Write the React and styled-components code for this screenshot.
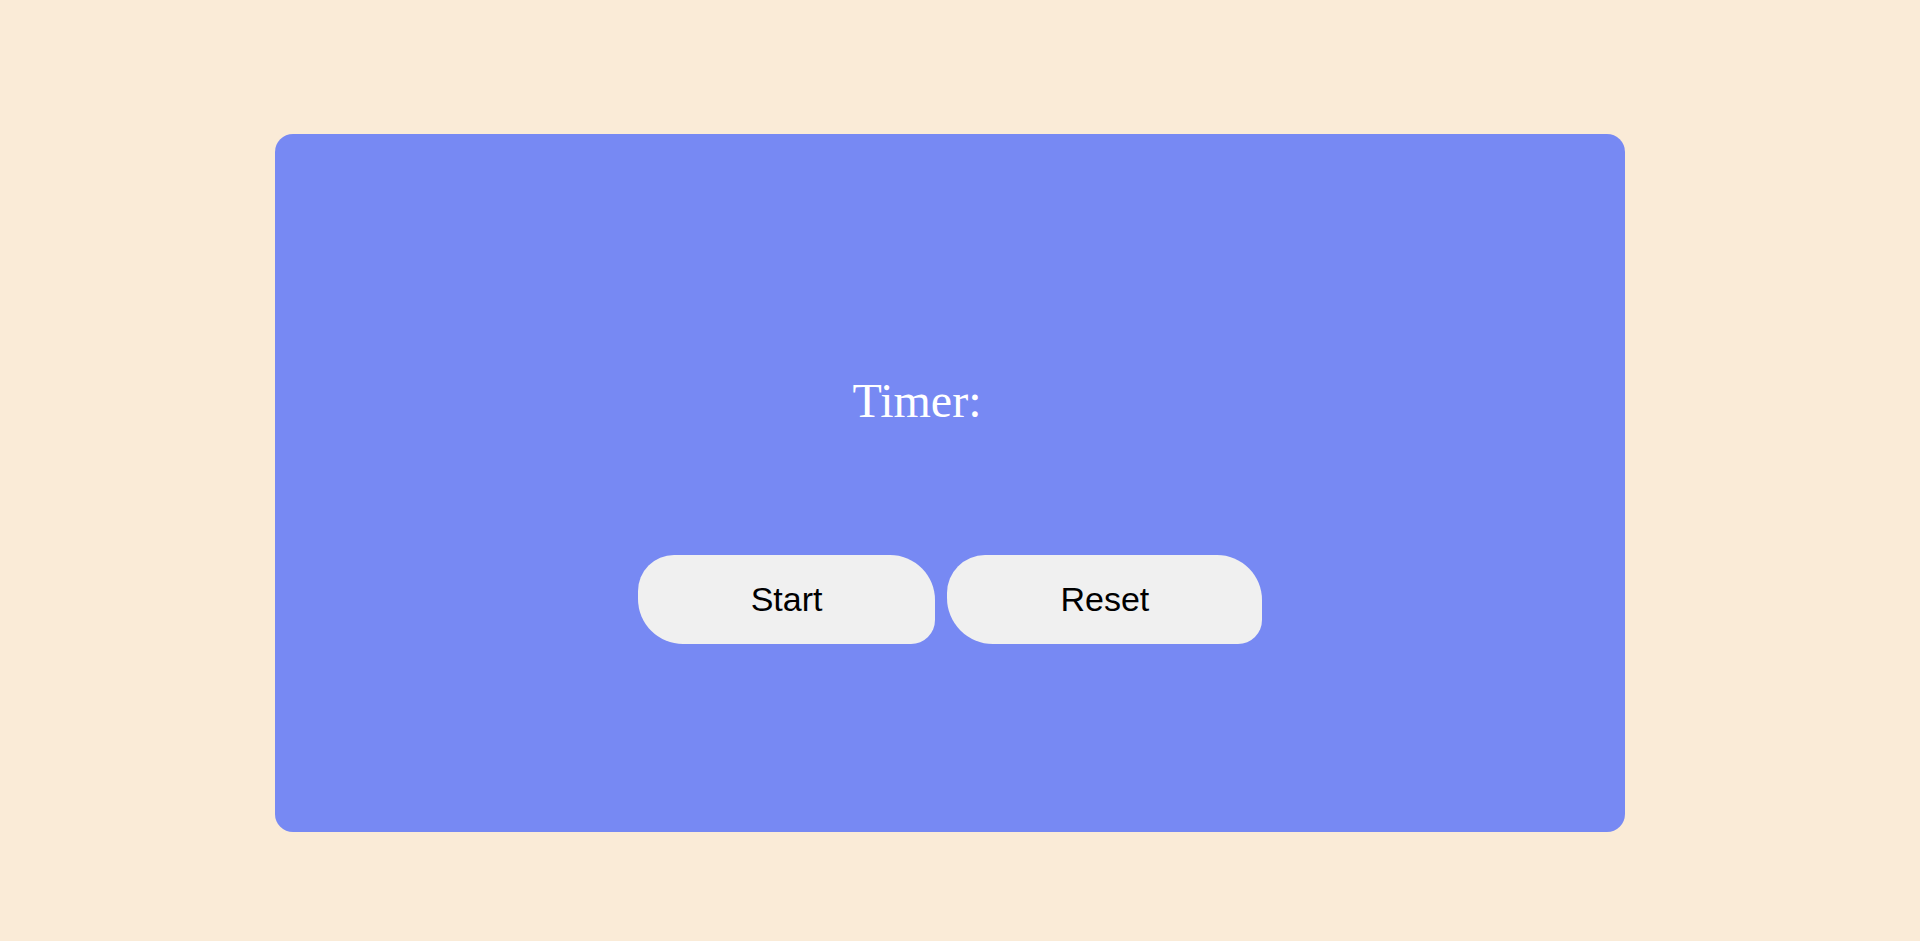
import React from "react";
import styled, { createGlobalStyle } from "styled-components";

const GlobalStyle = createGlobalStyle`
  html, body {
    background: #faebd7;
  }
  body {
    margin: 8px;
    font-family: "Liberation Serif", "Times New Roman", serif;
  }
`;

const Page = styled.div`
  min-height: 100vh;
  box-sizing: border-box;
  padding: 126px 20px 0 0;
  display: flex;
  justify-content: center;
  align-items: flex-start;
`;

const Card = styled.section`
  width: 1350px;
  height: 698px;
  box-sizing: border-box;
  padding: 239px 0 0;
  background: #7789f3;
  border-radius: 18px;
  display: flex;
  flex-direction: column;
  align-items: center;
`;

const TimerLine = styled.div`
  font-family: "Liberation Serif", "Times New Roman", serif;
  font-size: 48px;
  color: #ffffff;
  margin-bottom: 127px;
  white-space: pre;
`;

const TimeValue = styled.span`
  display: inline-block;
  width: 54px;
`;

const ButtonRow = styled.div`
  display: flex;
  gap: 12px;
`;

const ActionButton = styled.button`
  font-family: "Liberation Sans", Arial, sans-serif;
  font-size: 34px;
  line-height: 39px;
  color: #000000;
  background: #f0f0f0;
  border: none;
  padding: 25px ${(p) => p.$padX}px;
  border-radius: ${(p) => p.$radius};
  cursor: pointer;
`;

export default function App() {
  return (
    <>
      <GlobalStyle />
      <Page>
        <Card>
          <TimerLine>
            Timer: <TimeValue />
          </TimerLine>
          <ButtonRow>
            <ActionButton $padX={113} $radius="36px 45px 24px 45px">
              Start
            </ActionButton>
            <ActionButton $padX={113} $radius="38px 45px 24px 46px">
              Reset
            </ActionButton>
          </ButtonRow>
        </Card>
      </Page>
    </>
  );
}
